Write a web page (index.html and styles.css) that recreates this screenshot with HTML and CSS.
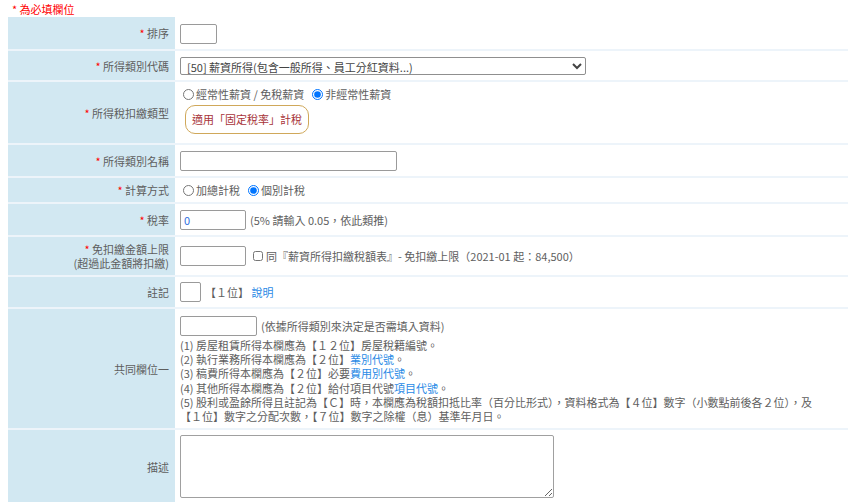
FILE: index.html
```html
<!DOCTYPE html>
<html lang="zh-Hant">
<head>
<meta charset="utf-8">
<title>所得類別設定</title>
<link rel="stylesheet" href="styles.css">
</head>
<body>
<div class="note"><span class="req">*</span> 為必填欄位</div>
<table class="form">
  <colgroup><col class="c-label"><col></colgroup>
  <tr class="r-sort">
    <th><span class="req">*</span> 排序</th>
    <td><input class="inp w-sort" type="text"></td>
  </tr>
  <tr>
    <th><span class="req">*</span> 所得類別代碼</th>
    <td><select class="sel"><option>[50] 薪資所得(包含一般所得、員工分紅資料...)</option></select></td>
  </tr>
  <tr>
    <th><span class="req">*</span> 所得稅扣繳類型</th>
    <td>
      <div class="radios">
        <label class="opt"><input type="radio" name="t1">經常性薪資 / 免稅薪資</label>
        <label class="opt"><input type="radio" name="t1" checked>非經常性薪資</label>
      </div>
      <div class="badge">適用「固定稅率」計稅</div>
    </td>
  </tr>
  <tr>
    <th><span class="req">*</span> 所得類別名稱</th>
    <td><input class="inp w-name" type="text"></td>
  </tr>
  <tr>
    <th><span class="req">*</span> 計算方式</th>
    <td>
      <div class="radios">
        <label class="opt"><input type="radio" name="t2">加總計稅</label>
        <label class="opt"><input type="radio" name="t2" checked>個別計稅</label>
      </div>
    </td>
  </tr>
  <tr>
    <th><span class="req">*</span> 稅率</th>
    <td><div class="line"><input class="inp w-rate blue" type="text" value="0"><span class="hint">(5% 請輸入 0.05，依此類推)</span></div></td>
  </tr>
  <tr>
    <th><span class="req">*</span> 免扣繳金額上限<br>(超過此金額將扣繳)</th>
    <td><div class="line"><input class="inp w-rate" type="text"><label class="chk"><input type="checkbox">同『薪資所得扣繳稅額表』- 免扣繳上限（2021-01 起：84,500）</label></div></td>
  </tr>
  <tr>
    <th>註記</th>
    <td><div class="line line-flag"><input class="inp w-flag" type="text"><span class="hint">【１位】 <a href="#">說明</a></span></div></td>
  </tr>
  <tr>
    <th>共同欄位一</th>
    <td>
      <div class="line line-first"><input class="inp w-common" type="text"><span class="hint">(依據所得類別來決定是否需填入資料)</span></div>
      <div class="lines">
        (1) 房屋租賃所得本欄應為【１２位】房屋稅籍編號。<br>
        (2) 執行業務所得本欄應為【２位】<a href="#">業別代號</a>。<br>
        (3) 稿費所得本欄應為【２位】必要<a href="#">費用別代號</a>。<br>
        (4) 其他所得本欄應為【２位】給付項目代號<a href="#">項目代號</a>。<br>
        (5) 股利或盈餘所得且註記為【Ｃ】時，本欄應為稅額扣抵比率（百分比形式），資料格式為【４位】數字（小數點前後各２位），及<br>【１位】數字之分配次數，【７位】數字之除權（息）基準年月日。
      </div>
    </td>
  </tr>
  <tr>
    <th>描述</th>
    <td><textarea class="txt"></textarea></td>
  </tr>
</table>
</body>
</html>
```
FILE: styles.css
```css
html, body {
  background: #fff;
}
body {
  margin: 0 8px;
  font-family: "Noto Sans CJK TC", "Noto Sans", sans-serif;
  font-size: 11px;
  line-height: 14px;
  color: #5e5e5e;
}
.note {
  height: 17px;
  line-height: 14px;
  padding: 2px 0 0 4px;
  box-sizing: border-box;
  color: #f00;
}
.req {
  color: #f00;
}
.form {
  width: 840px;
  border-collapse: collapse;
  table-layout: fixed;
}
.c-label {
  width: 167px;
}
.form th {
  background: #d2e8f2;
  font-weight: normal;
  text-align: right;
  padding: 5px 6px 5px 4px;
  border-bottom: 2px solid #edf4fa;
  vertical-align: middle;
}
.form td {
  padding: 5px;
  border-bottom: 2px solid #edf4fa;
  vertical-align: middle;
}
.form tr:last-child th,
.form tr:last-child td {
  border-bottom: none;
}
.line {
  display: flex;
  align-items: center;
  height: 21px;
}
.line-flag {
  height: 20px;
}
.line-first {
  height: 24px;
}
.inp {
  box-sizing: border-box;
  height: 20px;
  border: 1px solid #9a9a9a;
  border-radius: 2px;
  padding: 0 3px;
  font: inherit;
  color: #333;
  margin: 0;
  display: block;
}
.blue {
  color: #2f6fe0;
}
.w-sort { width: 37px; }
.w-name { width: 217px; margin-top: 1px; }
.w-rate { width: 66px; }
.w-flag { width: 21px; }
.w-common { width: 77px; }
.r-sort td {
  padding: 7px 5px 5px;
}
.sel {
  box-sizing: border-box;
  width: 406px;
  height: 18px;
  border: 1px solid #8f8f8f;
  border-radius: 2px;
  font: inherit;
  color: #444;
  background: #fff;
  padding: 0 2px;
  margin: 1px 0 0;
  display: block;
}
.hint {
  margin-left: 4px;
}
.radios {
  display: flex;
  align-items: center;
  height: 14px;
}
.opt {
  display: flex;
  align-items: center;
  margin-right: 5px;
}
.opt input {
  width: 11px;
  height: 11px;
  margin: 0 2px 0 3px;
}
.badge {
  display: inline-block;
  margin: 4px 0 4px 5px;
  padding: 6px 6px;
  border: 1px solid #d0a85a;
  border-radius: 10px;
  color: #a8343a;
  line-height: 15px;
}
.chk {
  display: flex;
  align-items: center;
  margin-left: 7px;
}
.chk input {
  width: 10px;
  height: 10px;
  margin: 0 3px 0 0;
}
a {
  color: #2a8ae6;
  text-decoration: none;
}
.lines {
  line-height: 14.2px;
}
.txt {
  display: block;
  box-sizing: border-box;
  width: 374px;
  height: 63px;
  border: 1px solid #a0a0a0;
  border-radius: 2px;
  margin: 0;
  font: inherit;
}
```
